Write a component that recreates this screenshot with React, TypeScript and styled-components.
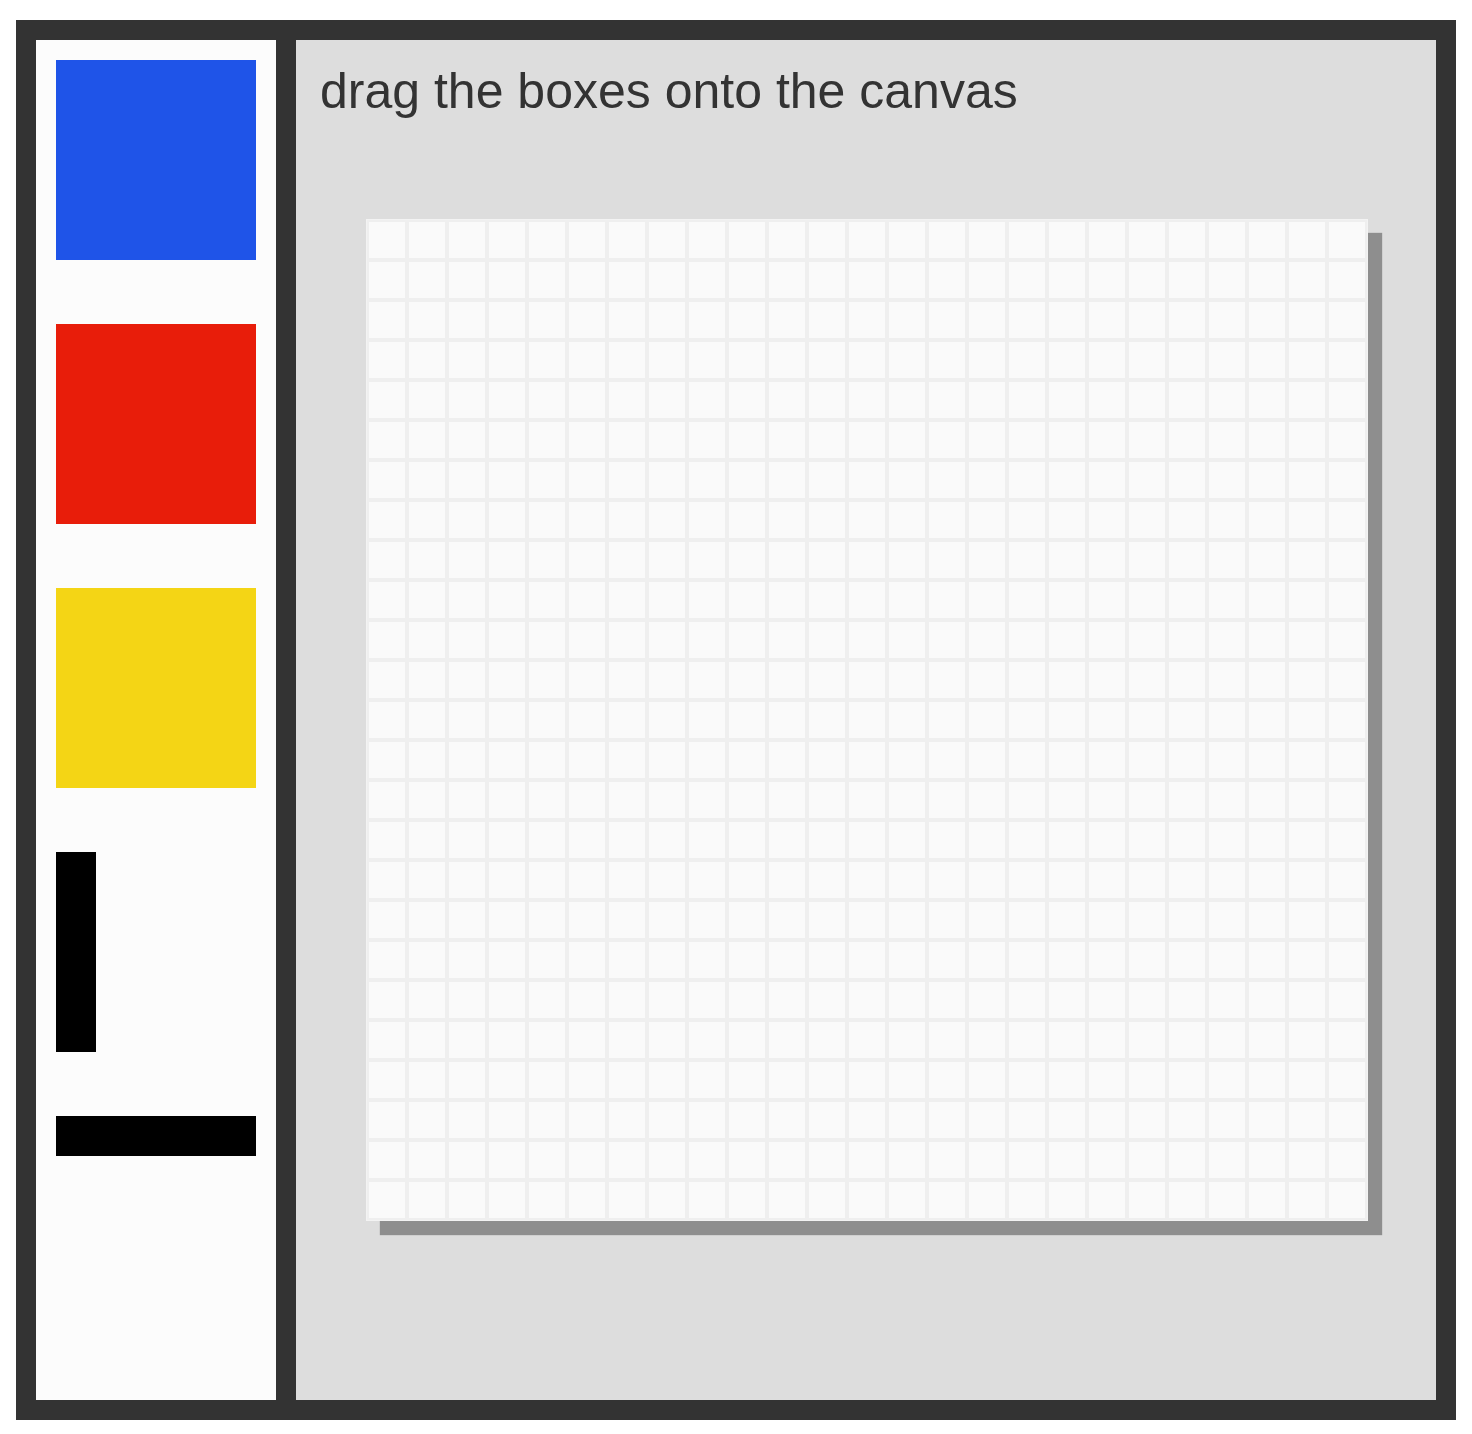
import React from "react";
import styled, { createGlobalStyle } from "styled-components";

const GlobalStyle = createGlobalStyle`
  html, body {
    margin: 0;
    padding: 0;
    background: #ffffff;
    font-family: "Liberation Sans", Arial, sans-serif;
  }
`;

const Page = styled.div`
  padding: 20px 16px 14px 16px;
`;

const Frame = styled.div`
  box-sizing: border-box;
  width: 1440px;
  height: 1400px;
  border: 20px solid #333333;
  display: flex;
`;

const Palette = styled.div`
  box-sizing: border-box;
  width: 260px;
  flex: none;
  background: #fcfcfc;
  border-right: 20px solid #333333;
  padding: 20px;
  display: flex;
  flex-direction: column;
  align-items: flex-start;
  gap: 64px;
`;

const Swatch = styled.div<{ $color: string; $w: number; $h: number }>`
  width: ${(p) => p.$w}px;
  height: ${(p) => p.$h}px;
  background: ${(p) => p.$color};
  flex: none;
`;

const Workspace = styled.div`
  flex: 1;
  background: #dddddd;
  padding: 22px 24px 0 24px;
  display: flex;
  flex-direction: column;
`;

const Heading = styled.div`
  font-family: "Liberation Sans", Arial, sans-serif;
  font-size: 50px;
  line-height: 58px;
  color: #333333;
  margin: 0;
`;

const Canvas = styled.div`
  margin: 99px 0 0 46px;
  width: 1002px;
  height: 1002px;
  box-sizing: border-box;
  border: 1px solid #f3f3f3;
  background: #fafafa;
  box-shadow: 14px 14px 1px #8e8e8e;
  display: grid;
  grid-template-columns: repeat(25, 40px);
  grid-auto-rows: 40px;
`;

const Cell = styled.div`
  box-sizing: border-box;
  border: 2px solid #efefef;
  background: #fafafa;
`;

const swatches = [
  { color: "#1f54e8", w: 200, h: 200 },
  { color: "#e81d0a", w: 200, h: 200 },
  { color: "#f4d515", w: 200, h: 200 },
  { color: "#000000", w: 40, h: 200 },
  { color: "#000000", w: 200, h: 40 },
];

export default function App() {
  const cells = Array.from({ length: 625 }, (_, i) => i);
  return (
    <>
      <GlobalStyle />
      <Page>
        <Frame>
          <Palette>
            {swatches.map((s, i) => (
              <Swatch key={i} $color={s.color} $w={s.w} $h={s.h} />
            ))}
          </Palette>
          <Workspace>
            <Heading>drag the boxes onto the canvas</Heading>
            <Canvas>
              {cells.map((i) => (
                <Cell key={i} />
              ))}
            </Canvas>
          </Workspace>
        </Frame>
      </Page>
    </>
  );
}
